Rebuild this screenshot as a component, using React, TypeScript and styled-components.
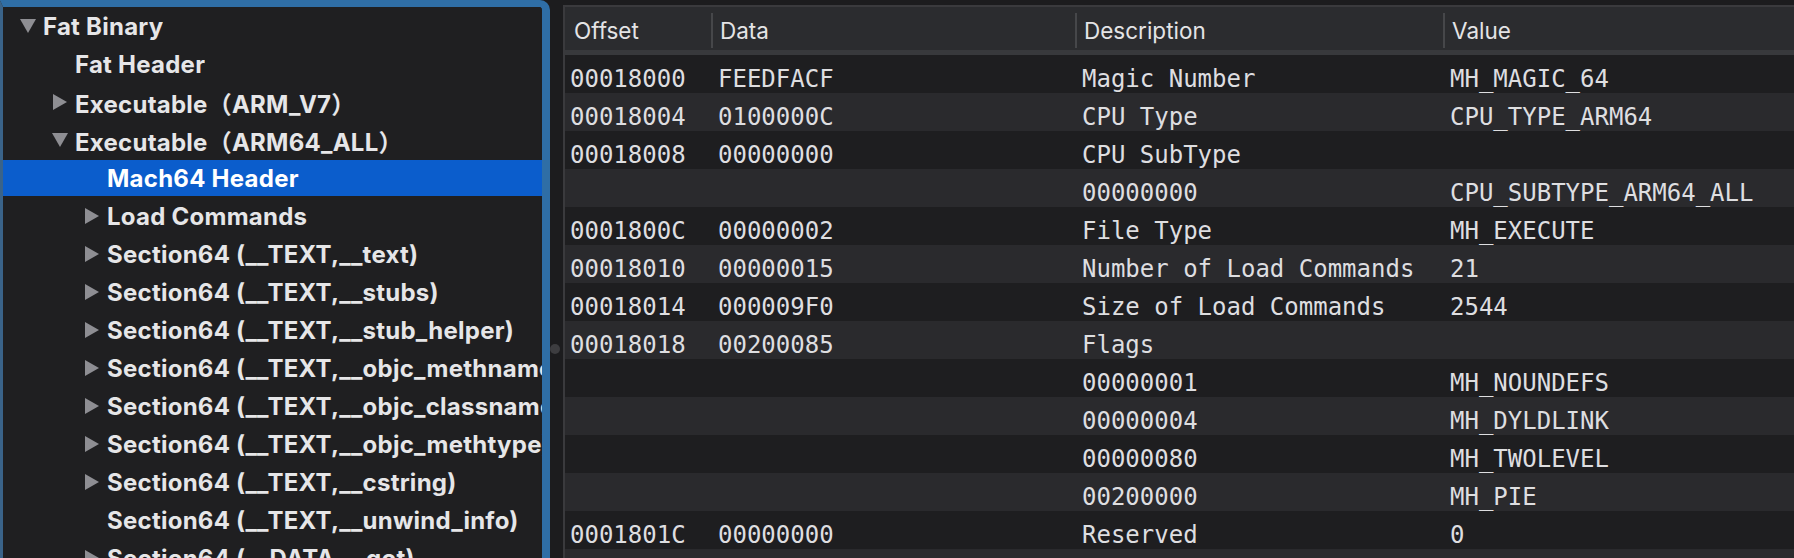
import React from 'react';
import styled, {createGlobalStyle} from 'styled-components';

const GlobalStyle = createGlobalStyle`
  html, body {
    margin: 0;
    padding: 0;
    background: #1c1c1e;
    overflow: hidden;
  }
  #root {
    height: 558px;
  }
`;

const Window = styled.div`
  display: flex;
  width: 1794px;
  height: 558px;
  background: #1c1c1e;
`;

const Sidebar = styled.div`
  flex: none;
  box-sizing: border-box;
  width: 550px;
  height: 100%;
  background: #1f1f21;
  border-top: 7px solid #2f6ea6;
  border-right: 8px solid #2f6ea6;
  border-left: 3px solid #3a6389;
  border-top-right-radius: 10px;
  overflow: hidden;
`;

const TreeRow = styled.div<{ $level: number; $selected?: boolean }>`
  display: flex;
  align-items: center;
  box-sizing: border-box;
  height: 38px;
  padding-left: ${p => 17 + p.$level * 32}px;
  background: ${p => (p.$selected ? '#0b5dcc' : 'transparent')};
  box-shadow: ${p => (p.$selected ? 'inset 0 1px 0 #1f1f21, inset 0 -1px 0 #1f1f21' : 'none')};
  white-space: nowrap;
`;

const Disclosure = styled.span`
  flex: none;
  display: flex;
  align-items: center;
  justify-content: center;
  width: 16px;
  height: 16px;
  margin-right: 7px;
`;

const TreeLabel = styled.span<{ $selected?: boolean }>`
  font-family: Inter, "Noto Sans CJK SC", sans-serif;
  font-weight: 700;
  font-size: 24px;
  letter-spacing: 0.25px;
  color: ${p => (p.$selected ? '#ffffff' : '#e6e6e8')};
  overflow: hidden;
`;

const Divider = styled.div`
  flex: none;
  position: relative;
  width: 13px;
`;

const Handle = styled.span`
  position: absolute;
  left: 0;
  top: 344px;
  width: 10px;
  height: 10px;
  border-radius: 50%;
  background: #3d3d40;
`;

const Detail = styled.div`
  flex: 1;
  margin-top: 5px;
  border-top: 2px solid #3a3a3d;
  border-left: 2px solid #3a3a3d;
  background: #1e1e20;
  overflow: hidden;
`;

const Columns = styled.div`
  display: grid;
  grid-template-columns: 146px 364px 368px 1fr;
`;

const HeaderRow = styled(Columns)`
  height: 43px;
  background: #2b2c2f;
  border-bottom: 5px solid #38393c;
`;

const HeaderCell = styled.div<{ $sep?: boolean }>`
  position: relative;
  display: flex;
  align-items: center;
  padding: 4px 0 0 9px;
  font-family: Inter, sans-serif;
  font-size: 22.5px;
  color: #e4e4e6;

  &::before {
    content: '';
    display: ${p => (p.$sep ? 'block' : 'none')};
    position: absolute;
    left: 0;
    top: 6px;
    bottom: 2px;
    width: 2px;
    background: #46474a;
  }
`;

const DataRow = styled(Columns)<{ $alt: boolean }>`
  height: 38px;
  background: ${p => (p.$alt ? '#2a2a2d' : '#1e1e20')};
`;

const Cell = styled.div<{ $first?: boolean }>`
  display: flex;
  align-items: center;
  padding: 10px 0 0 ${p => (p.$first ? 5 : 7)}px;
  font-family: "DejaVu Sans Mono", "Liberation Mono", monospace;
  font-size: 24px;
  color: #dedee0;
  white-space: nowrap;
`;

type Node = { label: string; level: number; state?: 'open' | 'closed'; selected?: boolean };

const tree: Node[] = [
  {label: 'Fat Binary', level: 0, state: 'open'},
  {label: 'Fat Header', level: 1},
  {label: 'Executable（ARM_V7）', level: 1, state: 'closed'},
  {label: 'Executable（ARM64_ALL）', level: 1, state: 'open'},
  {label: 'Mach64 Header', level: 2, selected: true},
  {label: 'Load Commands', level: 2, state: 'closed'},
  {label: 'Section64 (__TEXT,__text)', level: 2, state: 'closed'},
  {label: 'Section64 (__TEXT,__stubs)', level: 2, state: 'closed'},
  {label: 'Section64 (__TEXT,__stub_helper)', level: 2, state: 'closed'},
  {label: 'Section64 (__TEXT,__objc_methname)', level: 2, state: 'closed'},
  {label: 'Section64 (__TEXT,__objc_classname)', level: 2, state: 'closed'},
  {label: 'Section64 (__TEXT,__objc_methtype)', level: 2, state: 'closed'},
  {label: 'Section64 (__TEXT,__cstring)', level: 2, state: 'closed'},
  {label: 'Section64 (__TEXT,__unwind_info)', level: 2},
  {label: 'Section64 (__DATA,__got)', level: 2, state: 'closed'},
];

const rows: string[][] = [
  ['00018000', 'FEEDFACF', 'Magic Number', 'MH_MAGIC_64'],
  ['00018004', '0100000C', 'CPU Type', 'CPU_TYPE_ARM64'],
  ['00018008', '00000000', 'CPU SubType', ''],
  ['', '', '00000000', 'CPU_SUBTYPE_ARM64_ALL'],
  ['0001800C', '00000002', 'File Type', 'MH_EXECUTE'],
  ['00018010', '00000015', 'Number of Load Commands', '21'],
  ['00018014', '000009F0', 'Size of Load Commands', '2544'],
  ['00018018', '00200085', 'Flags', ''],
  ['', '', '00000001', 'MH_NOUNDEFS'],
  ['', '', '00000004', 'MH_DYLDLINK'],
  ['', '', '00000080', 'MH_TWOLEVEL'],
  ['', '', '00200000', 'MH_PIE'],
  ['0001801C', '00000000', 'Reserved', '0'],
  ['', '', '', ''],
];

const headers = ['Offset', 'Data', 'Description', 'Value'];

const Triangle = ({state}: { state?: 'open' | 'closed' }) => {
  if (!state) return <Disclosure />;
  return (
    <Disclosure>
      <svg width="16" height="16" viewBox="0 0 16 16">
        {state === 'open'
          ? <polygon points="0,1 16,1 8,15" fill="#8e8e93" />
          : <polygon points="1,0 15,8 1,16" fill="#8e8e93" />}
      </svg>
    </Disclosure>
  );
};

const App = () => (
  <>
    <GlobalStyle />
    <Window>
      <Sidebar>
        {tree.map(node => (
          <TreeRow key={node.label} $level={node.level} $selected={node.selected}>
            <Triangle state={node.state} />
            <TreeLabel $selected={node.selected}>{node.label}</TreeLabel>
          </TreeRow>
        ))}
      </Sidebar>
      <Divider>
        <Handle />
      </Divider>
      <Detail>
        <HeaderRow>
          {headers.map((h, i) => (
            <HeaderCell key={h} $sep={i > 0}>{h}</HeaderCell>
          ))}
        </HeaderRow>
        {rows.map((r, i) => (
          <DataRow key={i} $alt={i % 2 === 1}>
            {r.map((c, j) => (
              <Cell key={j} $first={j === 0}>{c}</Cell>
            ))}
          </DataRow>
        ))}
      </Detail>
    </Window>
  </>
);

export default App;
